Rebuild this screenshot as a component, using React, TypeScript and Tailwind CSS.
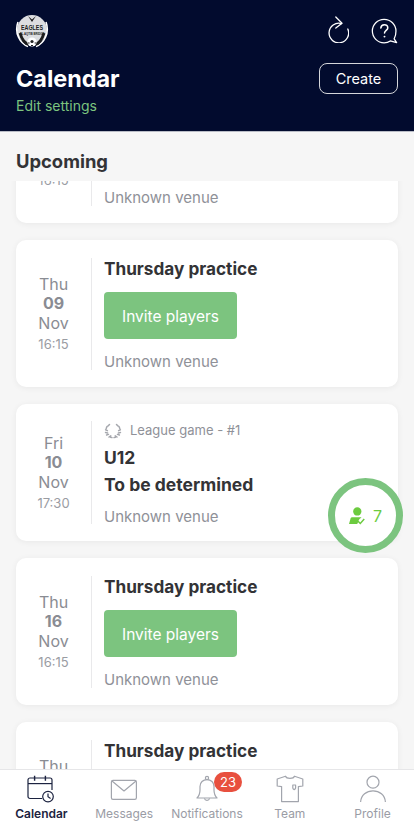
import { useMemo } from 'react';

type Practice = { day: string; date: string; month: string; time: string };

function Logo() {
  return (
    <svg width="34" height="34" viewBox="0 0 34 34" className="block -ml-[1px] -mt-[1px]">
      <circle cx="17" cy="16" r="15" fill="#dcdde0" />
      <path d="M3 8 C-1 19 5 29.5 13 32.5" fill="none" stroke="#ffffff" strokeWidth="1.6" />
      <path d="M31 8 C35 19 29 29.5 21 32.5" fill="none" stroke="#ffffff" strokeWidth="1.6" />
      <path d="M5 19 C7 26 10 29.5 14 30.5" fill="none" stroke="#1c1c1c" strokeWidth="2.8" />
      <path d="M29 19 C27 26 24 29.5 20 30.5" fill="none" stroke="#1c1c1c" strokeWidth="2.8" />
      <path d="M13 2 L17 5.5 L21 2 L17 8 Z" fill="#1c1c1c" />
      <text x="17" y="15.5" textAnchor="middle" fontSize="6.6" fontWeight="700" fill="#1d1d1d" fontFamily="Liberation Sans, sans-serif" textLength="22" lengthAdjust="spacingAndGlyphs">EAGLES</text>
      <text x="17" y="20.5" textAnchor="middle" fontSize="2.8" fontWeight="700" fill="#1d1d1d" fontFamily="Liberation Sans, sans-serif">AL AQTIB BRIDGE</text>
      <circle cx="17" cy="28" r="4.6" fill="#ffffff" />
      <circle cx="17" cy="27.5" r="1.6" fill="#222" />
      <path d="M13 29 h1.6 M19.6 29 h1.6 M16 31.5 h2" stroke="#222" strokeWidth="1" />
    </svg>
  );
}

function RefreshIcon() {
  return (
    <svg width="22" height="27" viewBox="0 0 22 27" fill="none" stroke="#fff" strokeWidth="1.3" strokeLinecap="round" strokeLinejoin="round" className="mb-[3px]">
      <path d="M14.6 7.6 A9.8 9.8 0 1 0 20.8 13" />
      <path d="M8.8 1 L15 7.2 L8.8 12" />
    </svg>
  );
}

function HelpIcon() {
  return (
    <svg width="27" height="27" viewBox="0 0 28 28" fill="none" stroke="#fff" strokeWidth="1.3" strokeLinejoin="round" strokeLinecap="round">
      <path d="M13.6 1.3 A12.2 12.2 0 1 0 13.6 25.7 C16 25.7 18.3 25 20 23.8 L26.6 25.6 L24 21.6 C25.2 19.6 25.9 16.5 25.9 13.5 A12.3 12.3 0 0 0 13.6 1.3 Z" />
      <path d="M10.2 10.4 C10.4 8.2 12 7 13.8 7 C15.8 7 17.4 8.4 17.4 10.3 C17.4 12.7 14 13 14 15.6" strokeWidth="1.6" />
      <circle cx="14" cy="19.3" r="1" fill="#fff" stroke="none" />
    </svg>
  );
}

function Laurel() {
  return (
    <svg width="18" height="16" viewBox="0 0 18 16" fill="none" stroke="#a5a7ad" strokeWidth="1.5" strokeLinecap="round">
      <path d="M5.5 1.5 L4 3 M3 3.5 L2.2 5.5 M1.6 6.8 L3.4 7.6 M1.5 9.5 L3.6 9.9 M2.6 12 L4.5 11.4 M5 14 L6.8 12.8 M8 14.6 L6.5 14.2" />
      <path d="M12.5 1.5 L14 3 M15 3.5 L15.8 5.5 M16.4 6.8 L14.6 7.6 M16.5 9.5 L14.4 9.9 M15.4 12 L13.5 11.4 M13 14 L11.2 12.8 M10 14.6 L11.5 14.2" />
    </svg>
  );
}

function PlayerCheck() {
  return (
    <svg width="16" height="18" viewBox="0 0 17 19" fill="#6ccb3f">
      <circle cx="8.8" cy="4.7" r="4.4" />
      <path d="M1.5 12.6 C1.8 11.2 2.8 10.8 4 10.8 H13.2 C13 11.4 11.8 11.8 10.6 13.6 L8.8 18 H0 Z" />
      <path d="M9.6 15 L12 17.4 L16.2 12.8" fill="none" stroke="#6ccb3f" strokeWidth="1.6" />
    </svg>
  );
}

function CalendarIcon() {
  return (
    <svg width="28" height="28" viewBox="0 0 28 28" fill="none" stroke="#1c2340" strokeWidth="1.2">
      <path d="M15 23.5 H3 A2 2 0 0 1 1 21.5 V5 A2 2 0 0 1 3 3 H23 A2 2 0 0 1 25 5 V15" />
      <path d="M1 8.6 H25" />
      <path d="M7.6 0.8 V5.8 M18.4 0.8 V5.8" strokeWidth="1.4" />
      <circle cx="21" cy="21.6" r="5.3" />
      <path d="M21 18.4 V21.8 L23.6 23.6" />
    </svg>
  );
}

function MailIcon() {
  return (
    <svg width="28" height="22" viewBox="0 0 28 22" fill="none" stroke="#a2a5ad" strokeWidth="1.2" strokeLinejoin="round" className="mb-[2px]">
      <rect x="1.4" y="1.4" width="25" height="19" rx="1.6" />
      <path d="M2 2 L14 12 L26 2" />
    </svg>
  );
}

function BellIcon() {
  return (
    <svg width="24" height="28" viewBox="0 0 24 28" fill="none" stroke="#a2a5ad" strokeWidth="1.2" strokeLinejoin="round">
      <path d="M2 23 C4 21 5 18.5 5 15 V11.5 C5 7.5 8 4.6 12 4.6 C16 4.6 19 7.5 19 11.5 V15 C19 18.5 20 21 22 23 Z" />
      <circle cx="12" cy="3" r="1.6" />
      <path d="M9.4 23.4 A2.7 2.7 0 0 0 14.6 23.4" />
    </svg>
  );
}

function ShirtIcon() {
  return (
    <svg width="28" height="28" viewBox="0 0 28 28" fill="none" stroke="#a2a5ad" strokeWidth="1.2" strokeLinejoin="round">
      <path d="M9.5 1.2 L1.2 4 V11 L5.6 11.6 V26.6 H22.4 V11.6 L26.8 11 V4 L18.5 1.2 C17.6 4 10.4 4 9.5 1.2 Z" />
      <path d="M16.8 10 H19.6 V13 C19.6 14 18.2 14.6 18.2 14.6 C18.2 14.6 16.8 14 16.8 13 Z" />
    </svg>
  );
}

function ProfileIcon() {
  return (
    <svg width="28" height="28" viewBox="0 0 28 28" fill="none" stroke="#a2a5ad" strokeWidth="1.2">
      <circle cx="14" cy="7.2" r="6" />
      <path d="M1.6 27 C2 20 7.6 15.8 14 15.8 C20.4 15.8 26 20 26.4 27" />
    </svg>
  );
}

function DateColumn({ day, date, month, time }: Practice) {
  return (
    <div className="w-[75px] shrink-0 flex flex-col items-center justify-center text-[#8a8c93]">
      <div className="text-[16px] leading-[20px]">{day}</div>
      <div className="text-[16px] leading-[19px] font-bold">{date}</div>
      <div className="text-[16px] leading-[20px]">{month}</div>
      <div className="text-[13px] leading-[20px] mt-[1px] text-[#9a9ca3]">{time}</div>
    </div>
  );
}

function PracticeCard(p: Practice) {
  return (
    <div className="bg-white rounded-[10px] shadow-[0_1px_6px_rgba(0,0,0,0.06)] h-[147px] flex items-center">
      <DateColumn {...p} />
      <div className="h-[112px] flex-1 border-l border-[#e9e9eb] pl-[12px] flex flex-col">
        <div className="text-[17.2px] leading-[22px] font-bold text-[#333336]">Thursday practice</div>
        <button type="button" className="mt-[12px] shrink-0 w-[133px] h-[47px] pt-[3px] rounded-[4px] bg-[#7cc47f] text-white text-[15.5px]">
          Invite players
        </button>
        <div className="mt-[13px] shrink-0 text-[15px] leading-[20px] text-[#8f9198]">Unknown venue</div>
      </div>
    </div>
  );
}

export default function App() {
  const tabs = useMemo(
    () => [
      { label: 'Calendar', icon: <CalendarIcon />, active: true },
      { label: 'Messages', icon: <MailIcon /> },
      { label: 'Notifications', icon: <BellIcon />, badge: '23' },
      { label: 'Team', icon: <ShirtIcon /> },
      { label: 'Profile', icon: <ProfileIcon /> },
    ],
    []
  );

  return (
    <div className="relative w-[414px] h-[840px] overflow-hidden bg-[#f6f6f6] flex flex-col font-['Inter',sans-serif]">
      <header className="h-[132px] shrink-0 bg-[#020b2e] border-b border-[#b9bcc6] px-4 pt-[13px]">
        <div className="flex items-center justify-between h-[36px]">
          <Logo />
          <div className="flex items-center gap-[22px]">
            <RefreshIcon />
            <HelpIcon />
          </div>
        </div>
        <div className="flex items-start justify-between mt-[14px]">
          <div>
            <h1 className="text-[23.4px] leading-[32px] font-bold text-white">Calendar</h1>
            <a className="block text-[14px] leading-[20px] mt-[1px] text-[#7cc47f]">Edit settings</a>
          </div>
          <button type="button" className="w-[79px] h-[31px] rounded-[8px] border border-[#d5d6da] text-white text-[14.5px]">
            Create
          </button>
        </div>
      </header>

      <div className="h-[49px] shrink-0 px-4 pt-[17px] text-[18.4px] leading-[24px] font-bold text-[#333336]">Upcoming</div>

      <div className="flex-1 min-h-0 overflow-hidden px-4">
        <div className="-mt-[105px] flex flex-col gap-[17px]">
          <PracticeCard day="Thu" date="02" month="Nov" time="16:15" />
          <PracticeCard day="Thu" date="09" month="Nov" time="16:15" />
          <div className="bg-white rounded-[10px] shadow-[0_1px_6px_rgba(0,0,0,0.06)] h-[137px] flex items-center">
            <DateColumn day="Fri" date="10" month="Nov" time="17:30" />
            <div className="h-[103px] flex-1 border-l border-[#e9e9eb] pl-[12px] flex flex-col">
              <div className="flex items-center gap-[8px] h-[18px] mt-[1px] text-[13px] text-[#8f9198]">
                <Laurel />
                <span>League game - #1</span>
              </div>
              <div className="mt-[4px] text-[17.5px] leading-[27px] font-bold text-[#333336]">U12</div>
              <div className="text-[17.5px] leading-[27px] font-bold text-[#333336]">To be determined</div>
              <div className="mt-[9px] text-[15px] leading-[20px] text-[#8f9198]">Unknown venue</div>
            </div>
          </div>
          <PracticeCard day="Thu" date="16" month="Nov" time="16:15" />
          <PracticeCard day="Thu" date="23" month="Nov" time="16:15" />
        </div>
      </div>

      <nav className="h-[71px] shrink-0 bg-white border-t border-[#e6e6e8] flex">
        {tabs.map((t) => (
          <div key={t.label} className="w-[82.8px] flex flex-col items-center pt-[5px]">
            <div className="relative h-[28px] flex items-end justify-center">
              {t.icon}
              {t.badge && (
                <span className="absolute left-[19px] -top-[3px] w-[28px] h-[20px] rounded-full bg-[#e8503f] text-white text-[13px] leading-[20px] text-center">
                  {t.badge}
                </span>
              )}
            </div>
            <div className={t.active ? 'mt-[2px] text-[12px] leading-[18px] font-semibold text-[#1c2340]' : 'mt-[2px] text-[12px] leading-[18px] text-[#9a9ca5]'}>
              {t.label}
            </div>
          </div>
        ))}
      </nav>

      <div className="absolute left-[328px] top-[478px] w-[75px] h-[75px] rounded-full border-[7px] border-[#7cc47f] bg-white flex items-center justify-center gap-[8px] text-[#6ccb3f] text-[16px]">
        <PlayerCheck />
        <span>7</span>
      </div>
    </div>
  );
}
